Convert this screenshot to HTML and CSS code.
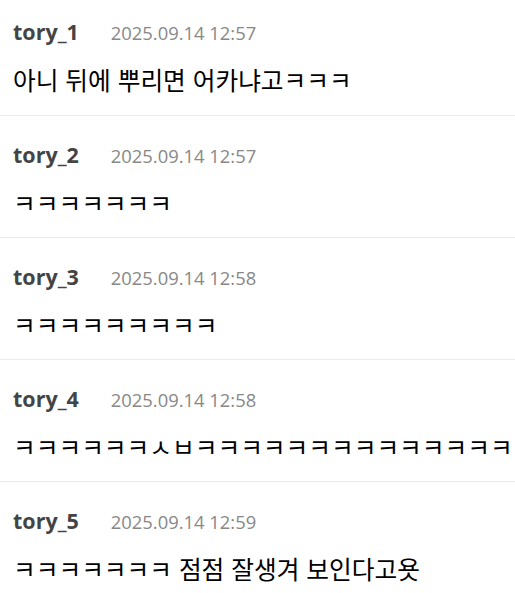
FILE: index.html
```html
<!DOCTYPE html>
<html lang="ko">
<head>
<meta charset="utf-8">
<link rel="stylesheet" href="styles.css">
</head>
<body>
<ul class="comments">
  <li class="comment">
    <div class="meta"><span class="user">tory_1</span><span class="date">2025.09.14 12:57</span></div>
    <p class="text">아니 뒤에 뿌리면 어카냐고ㅋㅋㅋ</p>
  </li>
  <li class="comment">
    <div class="meta"><span class="user">tory_2</span><span class="date">2025.09.14 12:57</span></div>
    <p class="text">ㅋㅋㅋㅋㅋㅋㅋ</p>
  </li>
  <li class="comment">
    <div class="meta"><span class="user">tory_3</span><span class="date">2025.09.14 12:58</span></div>
    <p class="text">ㅋㅋㅋㅋㅋㅋㅋㅋㅋ</p>
  </li>
  <li class="comment">
    <div class="meta"><span class="user">tory_4</span><span class="date">2025.09.14 12:58</span></div>
    <p class="text">ㅋㅋㅋㅋㅋㅋㅅㅂㅋㅋㅋㅋㅋㅋㅋㅋㅋㅋㅋㅋㅋㅋ</p>
  </li>
  <li class="comment">
    <div class="meta"><span class="user">tory_5</span><span class="date">2025.09.14 12:59</span></div>
    <p class="text">ㅋㅋㅋㅋㅋㅋㅋ 점점 잘생겨 보인다고욧</p>
  </li>
</ul>
</body>
</html>
```
FILE: styles.css
```css
html, body {
  margin: 0;
  padding: 0;
  background: #fff;
}
body {
  font-family: "Open Sans", "Noto Sans CJK KR", sans-serif;
  overflow: hidden;
}
.comments {
  list-style: none;
  margin: 0;
  padding: 0;
}
.comment {
  display: flex;
  flex-direction: column;
  gap: 15px;
  padding: 25px 0 0 13px;
  border-bottom: 1px solid #ebebeb;
  height: 122px;
  box-sizing: border-box;
}
.comment:first-child {
  padding-top: 18px;
  height: 116px;
}
.meta {
  display: flex;
  align-items: baseline;
  gap: 32px;
  line-height: 28px;
}
.user {
  font-size: 21.5px;
  font-weight: 700;
  color: #444;
}
.date {
  font-size: 18.4px;
  color: #888;
}
.text {
  margin: 0;
  font-family: "Noto Sans CJK KR", sans-serif;
  font-size: 24.7px;
  line-height: 34px;
  color: #000;
  white-space: nowrap;
}
```
